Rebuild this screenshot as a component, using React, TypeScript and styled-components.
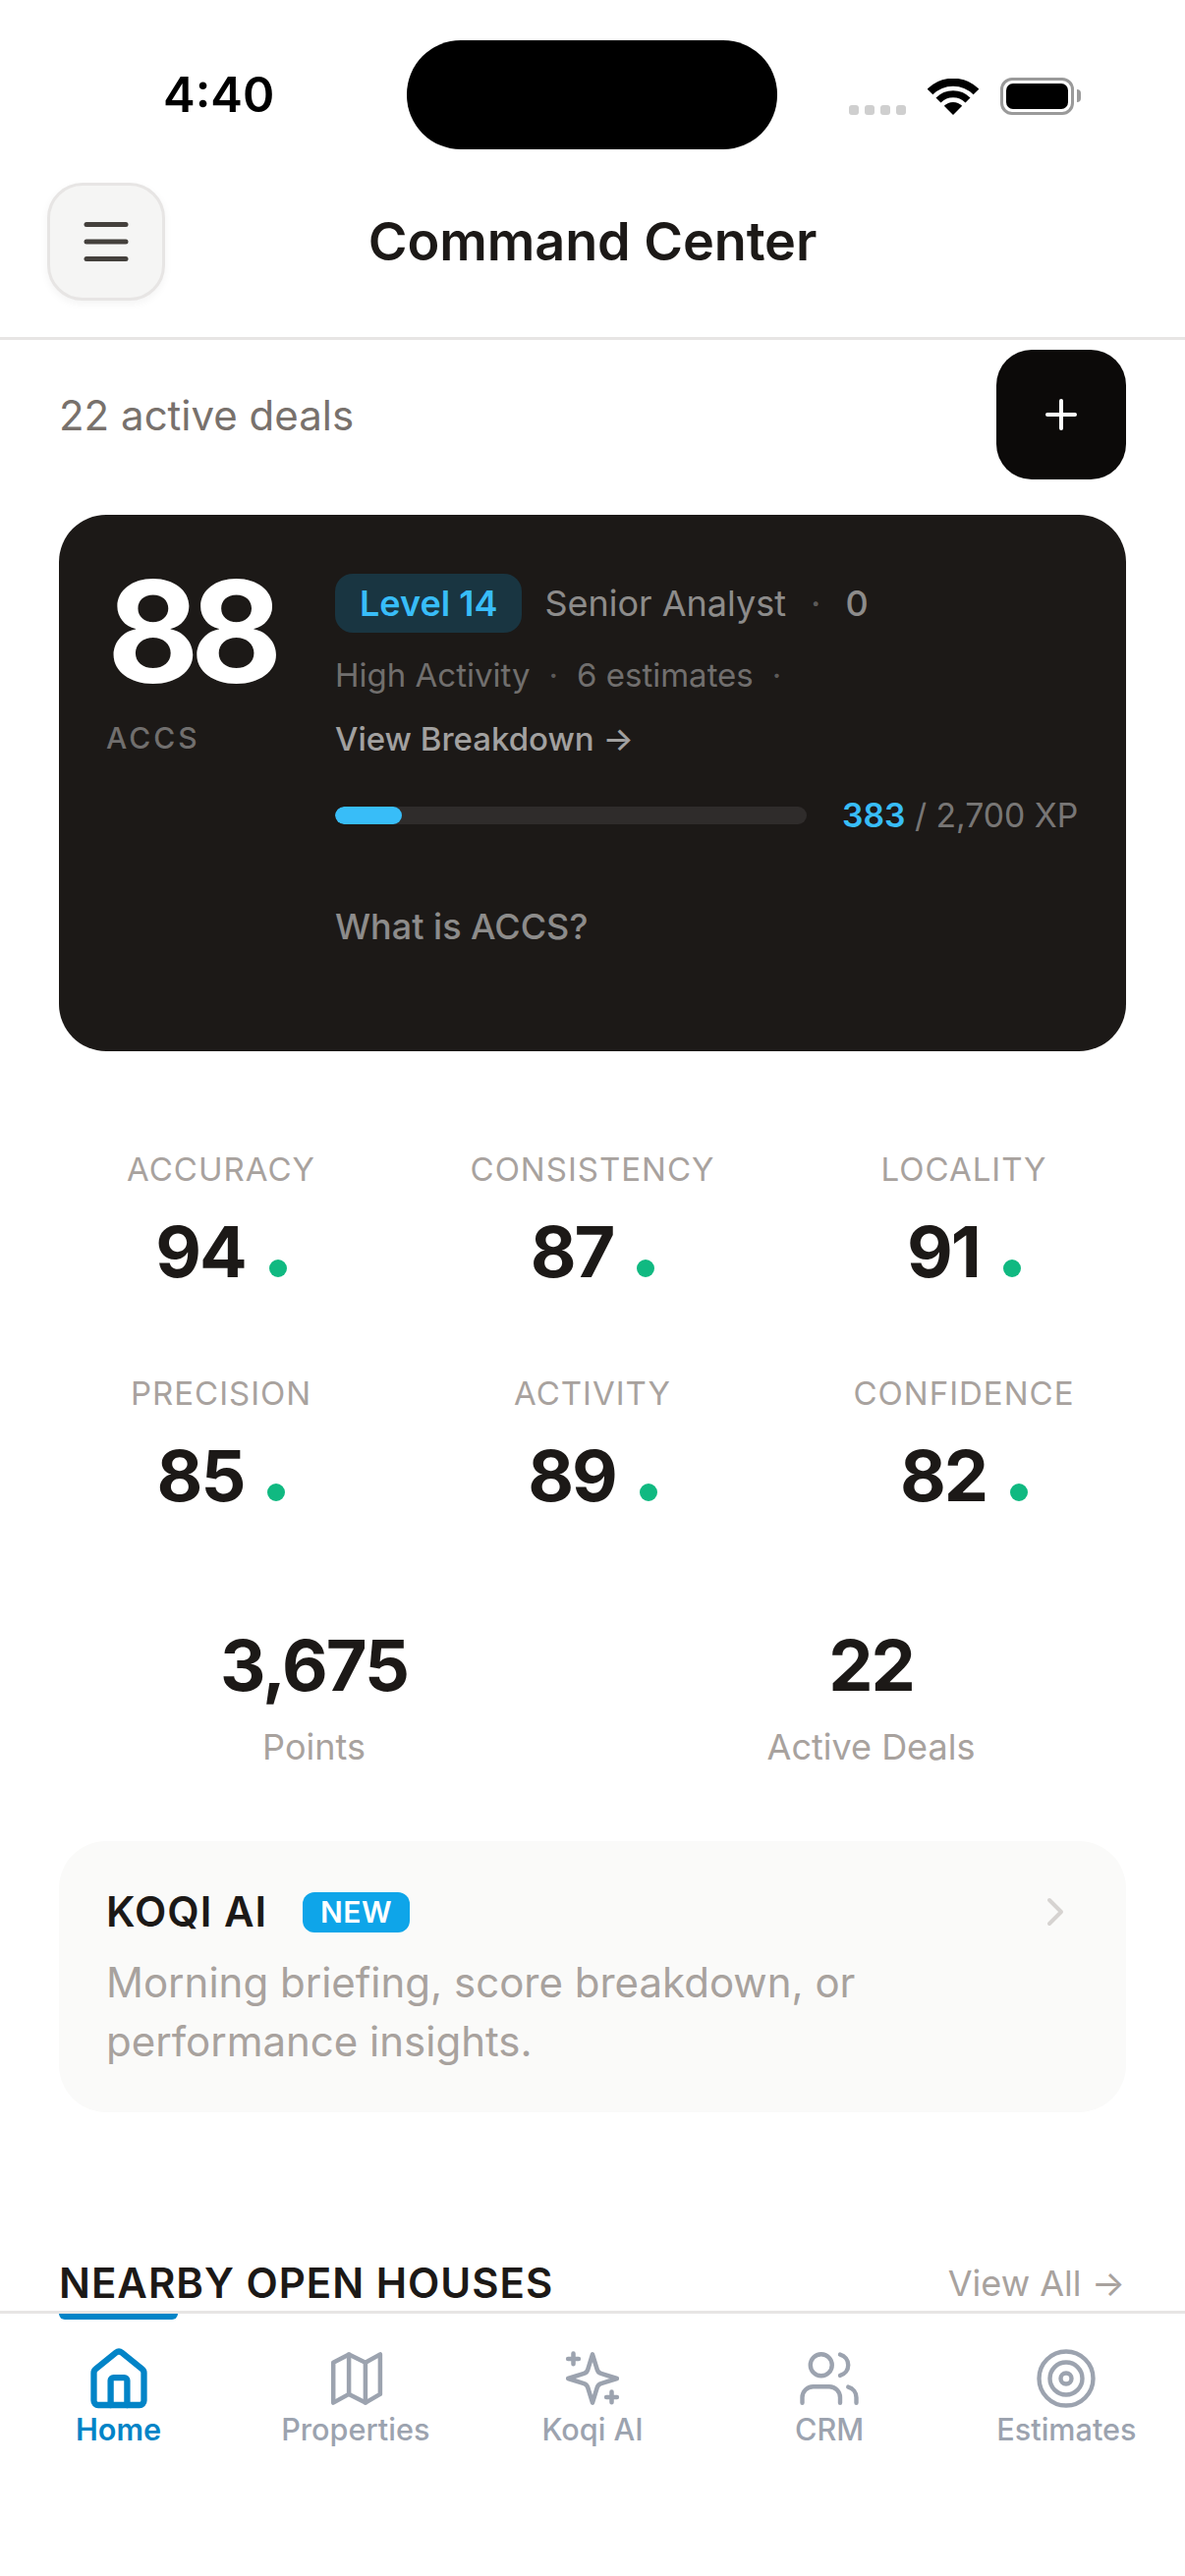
import styled, { createGlobalStyle } from 'styled-components'
import { ChevronRight, Menu, Plus, Target, Users } from 'lucide-react'

const GlobalStyle = createGlobalStyle`
  html, body {
    margin: 0;
    background: #fff;
  }
  * {
    box-sizing: border-box;
  }
  body {
    font-family: Inter, "Noto Sans", sans-serif;
    color: #1c1917;
  }
`

const Screen = styled.div`
  width: 1206px;
  height: 2622px;
  display: flex;
  flex-direction: column;
  overflow: hidden;
  background: #fff;
`

const StatusBar = styled.div`
  height: 186px;
  padding: 6px 113px 0 166px;
  display: grid;
  grid-template-columns: 248px 377px 1fr;
  align-items: center;
`

const Clock = styled.div`
  font-size: 49px;
  font-weight: 600;
  color: #000;
  line-height: 1;
`

const Island = styled.div`
  height: 111px;
  border-radius: 55px;
  background: #000;
`

const StatusIcons = styled.div`
  margin-top: 3px;
  display: flex;
  align-items: flex-end;
  justify-content: flex-end;
  gap: 22px;
`

const SignalDots = styled.div`
  display: flex;
  gap: 6px;
`

const SignalDot = styled.span`
  width: 10px;
  height: 10px;
  border-radius: 3px;
  background: #cfcfcf;
`

const Battery = styled.div`
  position: relative;
  width: 75px;
  height: 38px;
  padding: 3px;
  border: 3px solid #9a9a9a;
  border-radius: 12px;

  &::before {
    content: '';
    display: block;
    height: 100%;
    border-radius: 7px;
    background: #000;
  }
  &::after {
    content: '';
    position: absolute;
    right: -10px;
    top: 9px;
    width: 4px;
    height: 13px;
    border-radius: 0 4px 4px 0;
    background: #9a9a9a;
  }
`

const Header = styled.header`
  display: grid;
  grid-template-columns: 1fr auto 1fr;
  align-items: center;
  padding: 0 48px 37px;
  border-bottom: 3px solid #e7e5e4;
`

const MenuButton = styled.button`
  width: 120px;
  height: 120px;
  padding: 0;
  display: flex;
  align-items: center;
  justify-content: center;
  color: #44403c;
  background: #f5f5f4;
  border: 3px solid #e7e5e4;
  border-radius: 36px;
  box-shadow: 0 3px 9px rgba(0, 0, 0, 0.05);
`

const Title = styled.h1`
  margin: 0;
  font-size: 54px;
  font-weight: 600;
  line-height: 66px;
  letter-spacing: -0.1px;
  color: #1c1917;
`

const Content = styled.main`
  flex: 1;
  min-height: 0;
  overflow: hidden;
  padding: 10px 60px 0;
`

const TopRow = styled.div`
  display: flex;
  align-items: center;
  justify-content: space-between;
`

const DealCount = styled.span`
  font-size: 42px;
  color: #78716c;
`

const AddButton = styled.button`
  width: 132px;
  height: 132px;
  padding: 0;
  display: flex;
  align-items: center;
  justify-content: center;
  color: #fff;
  background: #0c0a09;
  border: 0;
  border-radius: 36px;
`

const ScoreCard = styled.section`
  height: 546px;
  margin-top: 36px;
  padding: 60px 48px 0;
  display: flex;
  background: #1c1917;
  border-radius: 48px;
`

const ScoreColumn = styled.div`
  width: 233px;
  flex: none;
`

const ScoreValue = styled.div`
  margin: -1px 0 0 1px;
  font-size: 144px;
  font-weight: 700;
  line-height: 120px;
  letter-spacing: -9px;
  color: #fff;
`

const ScoreLabel = styled.div`
  margin-top: 28px;
  font-size: 30px;
  font-weight: 500;
  line-height: 40px;
  letter-spacing: 3px;
  color: rgba(255, 255, 255, 0.38);
`

const Details = styled.div`
  flex: 1;
  min-width: 0;
`

const LevelRow = styled.div`
  display: flex;
  align-items: center;
  font-size: 36px;
  color: rgba(255, 255, 255, 0.5);
`

const LevelPill = styled.span`
  height: 60px;
  padding: 0 25px;
  margin-right: 23px;
  display: flex;
  align-items: center;
  font-weight: 600;
  color: #38bdf8;
  background: rgba(14, 165, 233, 0.2);
  border-radius: 18px;
`

const Separator = styled.span<{ $gap: number }>`
  margin: 0 ${p => p.$gap}px;
  color: rgba(255, 255, 255, 0.3);
`

const LevelCount = styled.span`
  font-weight: 500;
`

const ActivityRow = styled.div`
  margin-top: 21px;
  font-size: 33px;
  line-height: 44px;
  color: rgba(255, 255, 255, 0.38);
`

const BreakdownLink = styled.div`
  margin-top: 21px;
  font-size: 33px;
  font-weight: 500;
  line-height: 44px;
  color: rgba(255, 255, 255, 0.6);
`

const ProgressRow = styled.div`
  margin-top: 34px;
  display: flex;
  align-items: center;
  gap: 36px;
`

const ProgressTrack = styled.div`
  width: 480px;
  height: 18px;
  border-radius: 9px;
  overflow: hidden;
  background: #2f2c2b;
`

const ProgressFill = styled.div`
  height: 100%;
  border-radius: 9px;
  background: #38bdf8;
`

const XpText = styled.div`
  font-size: 33.7px;
  line-height: 44px;
  color: rgba(255, 255, 255, 0.42);
  white-space: nowrap;

  b {
    font-weight: 600;
    color: #38bdf8;
  }
`

const WhatIsLink = styled.div`
  margin-top: 67px;
  font-size: 36px;
  font-weight: 500;
  line-height: 48px;
  color: rgba(255, 255, 255, 0.5);
`

const MetricGrid = styled.div`
  margin-top: 100px;
  display: grid;
  grid-template-columns: repeat(3, 1fr);
  row-gap: 80px;
  column-gap: 48px;
`

const Metric = styled.div`
  display: flex;
  flex-direction: column;
  align-items: center;
`

const MetricLabel = styled.div`
  font-size: 33px;
  line-height: 40px;
  letter-spacing: 1px;
  color: #a8a29e;
`

const MetricValueRow = styled.div`
  margin-top: 20px;
  display: flex;
  align-items: baseline;
  gap: 24px;
  font-size: 72px;
  font-weight: 700;
  line-height: 88px;
  letter-spacing: -2px;
  color: #1c1917;
`

const MetricDot = styled.span`
  width: 18px;
  height: 18px;
  border-radius: 50%;
  background: #10b981;
`

const TotalsRow = styled.div`
  margin-top: 105px;
  display: grid;
  grid-template-columns: 1fr 1fr;
  column-gap: 48px;
`

const Total = styled.div`
  display: flex;
  flex-direction: column;
  align-items: center;
`

const TotalValue = styled.div`
  font-size: 72px;
  font-weight: 700;
  line-height: 88px;
  letter-spacing: -2px;
  color: #1c1917;
`

const TotalLabel = styled.div`
  margin-top: 15px;
  font-size: 36px;
  line-height: 48px;
  color: #a8a29e;
`

const AiCard = styled.section`
  position: relative;
  height: 276px;
  margin-top: 72px;
  padding: 48px 48px 0;
  background: #fafaf9;
  border-radius: 48px;
`

const AiTitleRow = styled.div`
  display: flex;
  align-items: center;
  gap: 36px;
`

const AiTitle = styled.span`
  font-size: 42px;
  font-weight: 600;
  line-height: 48px;
  letter-spacing: 1px;
  color: #1c1917;
`

const NewBadge = styled.span`
  height: 41px;
  padding: 0 18px;
  display: flex;
  align-items: center;
  font-size: 30px;
  font-weight: 600;
  letter-spacing: 0.5px;
  color: #fff;
  background: #0ea5e9;
  border-radius: 12px;
`

const AiText = styled.p`
  margin: 18px 0 0;
  font-size: 42px;
  line-height: 60px;
  color: #a8a29e;
`

const AiChevron = styled.span`
  position: absolute;
  top: 48px;
  right: 48px;
  display: flex;
  color: #d6d3d1;
`

const SectionRow = styled.div`
  margin-top: 144px;
  display: flex;
  align-items: center;
  justify-content: space-between;
`

const SectionTitle = styled.h2`
  margin: 0;
  font-size: 42px;
  font-weight: 600;
  line-height: 60px;
  letter-spacing: 1px;
  color: #1c1917;
`

const ViewAll = styled.span`
  margin-right: 1px;
  font-size: 36px;
  color: #a8a29e;
`

const TabBar = styled.nav`
  position: relative;
  flex: none;
  height: 270px;
  padding-top: 30px;
  display: grid;
  grid-template-columns: repeat(5, 1fr);
  align-items: start;
  background: #fff;
  border-top: 3px solid #e7e5e4;
`

const TabIndicator = styled.span`
  position: absolute;
  top: 0;
  left: 60px;
  width: 121px;
  height: 6px;
  border-radius: 0 0 6px 6px;
  background: #0284c7;
`

const Tab = styled.div<{ $active?: boolean }>`
  display: flex;
  flex-direction: column;
  align-items: center;
  font-size: 30.6px;
  font-weight: ${p => (p.$active ? 600 : 500)};
  line-height: 32px;
  color: ${p => (p.$active ? '#0284c7' : '#9ca3af')};
`

const UsersIcon = styled(Users)`
  margin: 3px 0;
`

const TargetIcon = styled(Target)`
  margin: 3px 0;
`

const metrics: [string, number][] = [
  ['ACCURACY', 94],
  ['CONSISTENCY', 87],
  ['LOCALITY', 91],
  ['PRECISION', 85],
  ['ACTIVITY', 89],
  ['CONFIDENCE', 82]
]

function WifiIcon() {
  return (
    <svg width="52" height="37" viewBox="0 0 52 37" fill="none">
      <path d="M2.5 13.5 A33 33 0 0 1 49.5 13.5" stroke="#000" strokeWidth="8" />
      <path d="M11 22 A21 21 0 0 1 41 22" stroke="#000" strokeWidth="7" />
      <path d="M26 37 L16.8 27.8 A13 13 0 0 1 35.2 27.8 Z" fill="#000" />
    </svg>
  )
}

function TabIcon({ strokeWidth = 1.5, children }: { strokeWidth?: number; children: React.ReactNode }) {
  return (
    <svg width="72" height="72" viewBox="0 0 24 24" fill="none" stroke="currentColor" strokeWidth={strokeWidth} strokeLinecap="round" strokeLinejoin="round">
      {children}
    </svg>
  )
}

export default function App() {
  return (
    <Screen>
      <GlobalStyle />

      <StatusBar>
        <Clock>4:40</Clock>
        <Island />
        <StatusIcons>
          <SignalDots>
            <SignalDot />
            <SignalDot />
            <SignalDot />
            <SignalDot />
          </SignalDots>
          <WifiIcon />
          <Battery />
        </StatusIcons>
      </StatusBar>

      <Header>
        <MenuButton>
          <Menu size={60} strokeWidth={2} />
        </MenuButton>
        <Title>Command Center</Title>
        <div />
      </Header>

      <Content>
        <TopRow>
          <DealCount>22 active deals</DealCount>
          <AddButton>
            <Plus size={48} strokeWidth={2} />
          </AddButton>
        </TopRow>

        <ScoreCard>
          <ScoreColumn>
            <ScoreValue>88</ScoreValue>
            <ScoreLabel>ACCS</ScoreLabel>
          </ScoreColumn>
          <Details>
            <LevelRow>
              <LevelPill>Level 14</LevelPill>
              Senior Analyst
              <Separator $gap={25}>·</Separator>
              <LevelCount>0</LevelCount>
            </LevelRow>
            <ActivityRow>
              High Activity
              <Separator $gap={19}>·</Separator>
              6 estimates
              <Separator $gap={19}>·</Separator>
            </ActivityRow>
            <BreakdownLink>View Breakdown →</BreakdownLink>
            <ProgressRow>
              <ProgressTrack>
                <ProgressFill style={{ width: `${(383 / 2700) * 100}%` }} />
              </ProgressTrack>
              <XpText>
                <b>383</b> / 2,700 XP
              </XpText>
            </ProgressRow>
            <WhatIsLink>What is ACCS?</WhatIsLink>
          </Details>
        </ScoreCard>

        <MetricGrid>
          {metrics.map(([label, value]) => (
            <Metric key={label}>
              <MetricLabel>{label}</MetricLabel>
              <MetricValueRow>
                {value}
                <MetricDot />
              </MetricValueRow>
            </Metric>
          ))}
        </MetricGrid>

        <TotalsRow>
          <Total>
            <TotalValue>3,675</TotalValue>
            <TotalLabel>Points</TotalLabel>
          </Total>
          <Total>
            <TotalValue>22</TotalValue>
            <TotalLabel>Active Deals</TotalLabel>
          </Total>
        </TotalsRow>

        <AiCard>
          <AiTitleRow>
            <AiTitle>KOQI AI</AiTitle>
            <NewBadge>NEW</NewBadge>
          </AiTitleRow>
          <AiText>
            Morning briefing, score breakdown, or
            <br />
            performance insights.
          </AiText>
          <AiChevron>
            <ChevronRight size={48} strokeWidth={2} />
          </AiChevron>
        </AiCard>

        <SectionRow>
          <SectionTitle>NEARBY OPEN HOUSES</SectionTitle>
          <ViewAll>View All →</ViewAll>
        </SectionRow>
      </Content>

      <TabBar>
        <TabIndicator />
        <Tab $active>
          <TabIcon strokeWidth={2.1}>
            <path d="M3.5 10 a1.5 1.5 0 0 1 .6 -1.2 L11 3.2 a1.6 1.6 0 0 1 2 0 L19.9 8.8 a1.5 1.5 0 0 1 .6 1.2 V19.5 a1.5 1.5 0 0 1 -1.5 1.5 H5 a1.5 1.5 0 0 1 -1.5 -1.5 Z" />
            <path d="M9.2 21 V12.7 a1 1 0 0 1 1 -1 H13.8 a1 1 0 0 1 1 1 V21" />
          </TabIcon>
          Home
        </Tab>
        <Tab>
          <TabIcon>
            <path d="M4.4 6.6 L9.7 3.8 L15.3 6.6 L20.3 3.8 V17.3 L15.3 20.2 L9.7 17.3 L4.4 20.2 Z" />
            <path d="M9.7 3.8 V17.3 M15.3 6.6 V20.2" />
          </TabIcon>
          Properties
        </Tab>
        <Tab>
          <TabIcon>
            <path d="M12 3.8 L13.6 9 a2 2 0 0 0 1.3 1.3 L20.3 12 L14.9 13.7 a2 2 0 0 0 -1.3 1.3 L12 20.2 L10.4 15 a2 2 0 0 0 -1.3 -1.3 L3.7 12 L9.1 10.3 a2 2 0 0 0 1.3 -1.3 Z" />
            <path d="M5.5 3.5 v3.6 M3.7 5.3 h3.6" />
            <path d="M18.5 16.5 v3.6 M16.7 18.3 h3.6" />
          </TabIcon>
          Koqi AI
        </Tab>
        <Tab>
          <UsersIcon size={66} strokeWidth={1.6} />
          CRM
        </Tab>
        <Tab>
          <TargetIcon size={66} strokeWidth={1.6} />
          Estimates
        </Tab>
      </TabBar>
    </Screen>
  )
}
